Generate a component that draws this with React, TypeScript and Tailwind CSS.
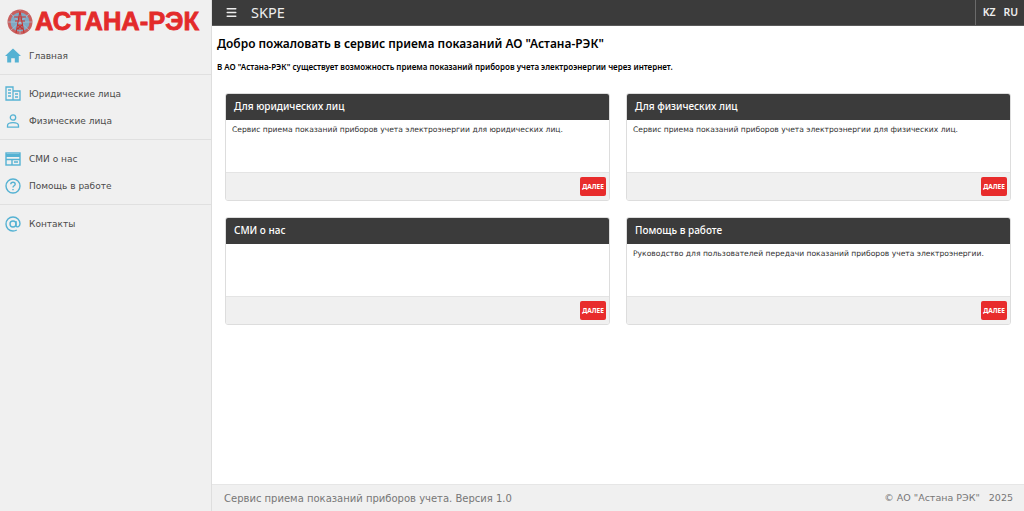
import React from "react";
import { Menu } from "lucide-react";

function Tower() {
  return (
    <svg width="26" height="26" viewBox="0 0 26 26" className="shrink-0">
      <circle cx="13" cy="13" r="12.5" fill="#c9605f" />
      <circle cx="13" cy="13" r="9.5" fill="#7fa9c4" />
      <path d="M1 13h24M13 1v24M4 5l18 16M22 5L4 21" stroke="#a9c4d6" strokeWidth="0.7" />
      <path d="M13 2L9 24M13 2l4 22M10.5 16h5M11 10h4M7 8h12M8 12h10M10 20l6 0M10.5 16L16 20M15.5 16L10 20" stroke="#c8332f" strokeWidth="1.1" fill="none" />
    </svg>
  );
}

function NavItem({ icon, label, h }: { icon: React.ReactNode; label: string; h: string }) {
  return (
    <div className={`flex items-center ${h} pl-[5px]`}>
      <span className="w-[16px] h-[16px] flex items-center justify-center shrink-0">{icon}</span>
      <span className="ml-[8px] mt-[2px] text-[9px] text-[#4a4a4a] font-['DejaVu_Sans',sans-serif]">{label}</span>
    </div>
  );
}

function Card({ title, text }: { title: string; text: string }) {
  return (
    <div className="rounded-[3px] border border-[#dddddd] flex flex-col h-[108px] overflow-hidden bg-white">
      <div className="h-[27px] -mx-px -mt-px bg-[#3b3b3b] flex items-center pl-[9px] text-white text-[10px] font-medium font-['Noto_Sans',sans-serif] shrink-0">
        {title}
      </div>
      <div className="h-[52px] pl-[6px] pt-[4px] text-[7.6px] leading-[12px] text-[#333333] font-['DejaVu_Sans',sans-serif]">
        {text}
      </div>
      <div className="flex-1 bg-[#f0f0f0] border-t border-[#e4e4e4] flex items-center justify-end pr-[3px]">
        <span className="w-[26px] h-[19px] rounded-[2px] bg-[#e82c2c] text-white text-[6.5px] font-bold flex items-center justify-center font-['Noto_Sans',sans-serif]">
          ДАЛЕЕ
        </span>
      </div>
    </div>
  );
}

export default function App() {
  return (
    <div className="w-[1024px] h-[511px] flex overflow-hidden bg-white">
      <aside className="w-[212px] shrink-0 bg-[#f0f0f0] border-r border-[#dedede] flex flex-col">
        <div className="h-[37px] flex items-center pl-[7px] pt-[6px]">
          <Tower />
          <span className="ml-[2px] text-[#e32b2b] text-[25.5px] leading-none font-black font-['Liberation_Sans',sans-serif] [-webkit-text-stroke:0.8px_#e32b2b] whitespace-nowrap">
            АСТАНА-РЭК
          </span>
        </div>
        <NavItem h="h-[37px]" label="Главная" icon={<svg width="16" height="15" viewBox="0 0 16 15"><path d="M8 .5L0 8h2.2v6.5h4v-4.2h3.6v4.2h4V8H16z" fill="#55b2d3" /></svg>} />
        <div className="border-t border-[#e0e0e0] mb-[5px]" />
        <NavItem h="h-[27px]" label="Юридические лица" icon={<svg width="16" height="15" viewBox="0 0 16 15" fill="none" stroke="#55b2d3" strokeWidth="1.3"><path d="M1 1h7v13H1zM8 5h7v9H8zM3 4h3M3 7h3M3 10h3M10 8h3M10 11h3" /></svg>} />
        <NavItem h="h-[27px]" label="Физические лица" icon={<svg width="14" height="14" viewBox="0 0 14 14" fill="none" stroke="#55b2d3" strokeWidth="1.3"><circle cx="7" cy="3.5" r="2.7" /><path d="M1.5 13.2v-1.5c0-2 2-3 5.5-3s5.5 1 5.5 3v1.5z" /></svg>} />
        <div className="border-t border-[#e0e0e0] mt-[5px] mb-[5px]" />
        <NavItem h="h-[27px]" label="СМИ о нас" icon={<svg width="16" height="14" viewBox="0 0 16 14" fill="none" stroke="#55b2d3" strokeWidth="1.4"><rect x="1" y="1" width="14" height="12" /><path d="M1 3.5h14" strokeWidth="3" /><path d="M1 7.5h14M7 7.5V13M9 10h4" /></svg>} />
        <NavItem h="h-[27px]" label="Помощь в работе" icon={<svg width="16" height="16" viewBox="0 0 16 16" fill="none" stroke="#55b2d3" strokeWidth="1.4"><circle cx="8" cy="8" r="7" /><path d="M5.8 6.2C5.8 5 6.8 4.2 8 4.2s2.2.8 2.2 2c0 1.6-2.2 1.6-2.2 3.3M8 11v1.2" /></svg>} />
        <div className="border-t border-[#e0e0e0] mt-[5px] mb-[5px]" />
        <NavItem h="h-[27px]" label="Контакты" icon={<svg width="16" height="16" viewBox="0 0 16 16" fill="none" stroke="#55b2d3" strokeWidth="1.4"><circle cx="8" cy="8" r="3" /><path d="M11 5v4.3c0 1.2 1 1.7 2 1.5 1.3-.4 2-1.8 2-3C15 4 12 1 8 1S1 4 1 8s3 7 7 7c1.5 0 2.7-.3 3.8-1" /></svg>} />
      </aside>
      <div className="flex-1 flex flex-col min-w-0">
        <header className="h-[26px] bg-[#3b3b3b] border-b border-[#5a5a5a] flex items-center shrink-0 text-[#eeeeee]">
          <Menu size={13} strokeWidth={2.5} className="ml-[13px]" />
          <span className="ml-[13px] text-[14.5px] font-['Noto_Sans',sans-serif]">SKPE</span>
          <div className="ml-auto h-full w-[49px] pl-[1px] border-l border-[#6a6a6a] flex items-center justify-center gap-[8px] text-[10.5px] font-semibold font-['Noto_Sans',sans-serif]">
            <span>KZ</span>
            <span>RU</span>
          </div>
        </header>
        <main className="flex-1 min-h-0 pl-[5px]">
          <h1 className="mt-[9px] text-[11.95px] leading-[18px] font-semibold text-black font-['Noto_Sans',sans-serif]">
            Добро пожаловать в сервис приема показаний АО "Астана-РЭК"
          </h1>
          <p className="mt-[8px] text-[8px] leading-[12px] font-semibold text-black font-['Noto_Sans',sans-serif]">
            В АО "Астана-РЭК" существует возможность приема показаний приборов учета электроэнергии через интернет.
          </p>
          <div className="mt-[20px] ml-[8px] w-[786px] grid grid-cols-2 gap-x-[16px] gap-y-[16px]">
            <Card title="Для юридических лиц" text="Сервис приема показаний приборов учета электроэнергии для юридических лиц." />
            <Card title="Для физических лиц" text="Сервис приема показаний приборов учета электроэнергии для физических лиц." />
            <Card title="СМИ о нас" text="" />
            <Card title="Помощь в работе" text="Руководство для пользователей передачи показаний приборов учета электроэнергии." />
          </div>
        </main>
        <footer className="h-[27px] shrink-0 bg-[#f0f0f0] border-t border-[#e6e6e6] flex items-center justify-between pl-[12px] pr-[11px] text-[10px] text-[#777777] font-['DejaVu_Sans',sans-serif]">
          <span>Сервис приема показаний приборов учета. Версия 1.0</span>
          <span className="whitespace-pre text-[9.5px]">© АО "Астана РЭК"   2025</span>
        </footer>
      </div>
    </div>
  );
}
